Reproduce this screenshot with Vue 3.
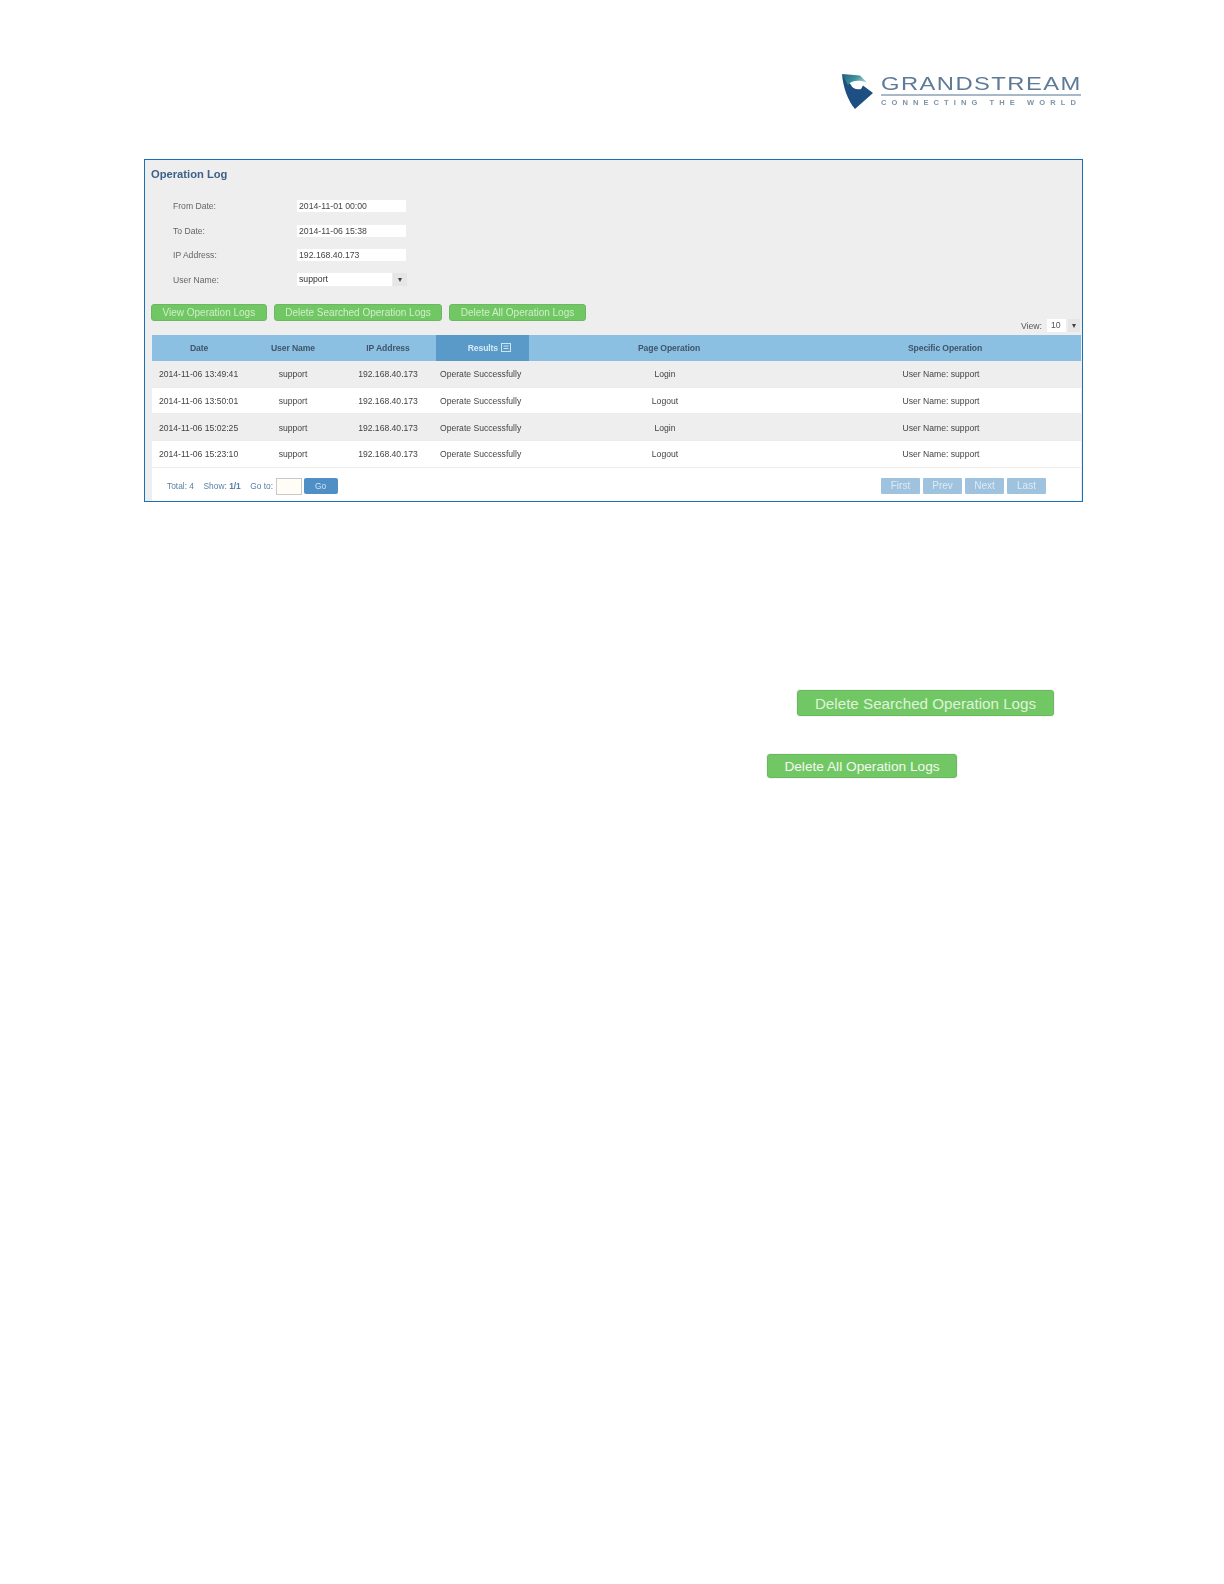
<script setup>
const fields = [
  { label: 'From Date:', value: '2014-11-01 00:00' },
  { label: 'To Date:', value: '2014-11-06 15:38' },
  { label: 'IP Address:', value: '192.168.40.173' },
]
const topButtons = ['View Operation Logs', 'Delete Searched Operation Logs', 'Delete All Operation Logs']
const rows = [
  ['2014-11-06 13:49:41', 'Login'],
  ['2014-11-06 13:50:01', 'Logout'],
  ['2014-11-06 15:02:25', 'Login'],
  ['2014-11-06 15:23:10', 'Logout'],
]
</script>

<template>
  <div class="page">
    <header class="logo">
      <svg class="mark" viewBox="0 0 36 38" width="36" height="38">
        <defs>
          <linearGradient id="teal" x1="0" y1="0" x2="1" y2="0.4">
            <stop offset="0" stop-color="#1f5f80" />
            <stop offset="0.6" stop-color="#3f929c" />
            <stop offset="1" stop-color="#9cc9cc" />
          </linearGradient>
        </defs>
        <path d="M2 1 C3 14 8 28 15 36 L33 20 L23 12.5 L21 16 C16 17 12 15 11 12 L8 8 Z" fill="#1d4f82" />
        <path d="M2 1 L20 2.5 L27 9.5 C20 7 14 7 10 10 L8 12 Z" fill="url(#teal)" />
      </svg>
      <div class="wordmark">
        <div class="brand">GRANDSTREAM</div>
        <div class="rule"></div>
        <div class="tagline">CONNECTING THE WORLD</div>
      </div>
    </header>

    <section class="panel">
      <h2 class="title">Operation Log</h2>
      <div class="form">
        <div v-for="f in fields" :key="f.label" class="field">
          <span class="label">{{ f.label }}</span>
          <span class="input">{{ f.value }}</span>
        </div>
        <div class="field">
          <span class="label">User Name:</span>
          <span class="select"><span class="select-value">support</span><span class="arrow">▾</span></span>
        </div>
      </div>

      <div class="actions">
        <button v-for="b in topButtons" :key="b" class="btn-green small">{{ b }}</button>
      </div>

      <div class="view-row">
        <span>View:</span>
        <span class="view-select"><span class="view-value">10</span><span class="arrow">▾</span></span>
      </div>

      <div class="table">
        <div class="row head">
          <div class="c">Date</div>
          <div class="c">User Name</div>
          <div class="c">IP Address</div>
          <div class="c sorted">Results
            <svg class="filter" viewBox="0 0 10 9" width="10" height="9">
              <rect x="0.5" y="0.5" width="9" height="8" fill="none" stroke="#cfe3f2" />
              <path d="M2.5 3 H7.5 M2.5 5.5 H7.5" stroke="#cfe3f2" />
            </svg>
          </div>
          <div class="c">Page Operation</div>
          <div class="c">Specific Operation</div>
        </div>
        <div v-for="r in rows" :key="r[0]" class="row body">
          <div class="l date">{{ r[0] }}</div>
          <div class="c">support</div>
          <div class="c">192.168.40.173</div>
          <div class="l res">Operate Successfully</div>
          <div class="c page-op">{{ r[1] }}</div>
          <div class="c spec">User Name: support</div>
        </div>
        <div class="pager">
          <div class="pager-left">
            <span>Total: 4</span>
            <span>Show: <b>1/1</b></span>
            <span class="goto">Go to:</span>
            <span class="go-input"></span>
            <span class="go">Go</span>
          </div>
          <div class="pager-right">
            <span v-for="p in ['First', 'Prev', 'Next', 'Last']" :key="p" class="nav">{{ p }}</span>
          </div>
        </div>
      </div>
    </section>

    <div class="big first"><button class="btn-green b16">Delete Searched Operation Logs</button></div>
    <div class="big second"><button class="btn-green b14">Delete All Operation Logs</button></div>
  </div>
</template>

<style scoped>
.page {
  width: 1224px;
  height: 1584px;
  background: #fff;
  font-family: "Liberation Sans", Arial, sans-serif;
  overflow: hidden;
  box-sizing: border-box;
  padding-top: 72px;
}
.logo {
  display: flex;
  justify-content: flex-end;
  align-items: flex-start;
  height: 87px;
  padding-right: 143px;
  gap: 5px;
  filter: blur(0.6px);
}
.mark { display: block; margin-top: 1px; }
.wordmark { width: 200px; }
.brand {
  font-size: 18px;
  line-height: 20px;
  margin-top: 2px;
  letter-spacing: 1.1px;
  color: #5d7a97;
  white-space: nowrap;
  transform: scaleX(1.32);
  transform-origin: left center;
}
.rule {
  height: 2px;
  background: #a9b8c6;
}
.tagline {
  font-size: 7.5px;
  line-height: 10px;
  margin-top: 2px;
  letter-spacing: 5.1px;
  color: #7d93a8;
  white-space: nowrap;
  font-weight: bold;
}
.panel {
  margin-left: 144px;
  width: 939px;
  height: 343px;
  box-sizing: border-box;
  border: 1px solid #1a6fb5;
  background: #eeeeee;
  position: relative;
  color: #555;
  font-size: 8.7px;
}
.panel > *:not(.table) { filter: blur(0.5px); }
.title {
  margin: 0;
  padding: 7px 0 0 6px;
  font-size: 11.2px;
  line-height: 14px;
  font-weight: bold;
  color: #3d5f8a;
}
.form {
  margin-top: 19px;
  display: flex;
  flex-direction: column;
  gap: 12.5px;
}
.field {
  display: flex;
  align-items: center;
  height: 12px;
  padding-left: 28px;
}
.label { width: 124px; font-size: 8.6px; color: #666; }
.input {
  width: 107px;
  height: 12px;
  line-height: 12px;
  background: #fff;
  padding-left: 2px;
  box-sizing: content-box;
  color: #444;
  font-size: 8.7px;
}
.select {
  display: flex;
  width: 110px;
  height: 13px;
  line-height: 13px;
  color: #333;
}
.select-value { flex: 1; background: #fff; padding-left: 2px; margin-right: 1px; }
.arrow { width: 14px; text-align: center; background: #e6e6e6; color: #444; font-size: 8px; }
.actions {
  display: flex;
  gap: 7px;
  margin: 18.5px 0 0 6px;
}
.btn-green {
  border: 1px solid #6cb860;
  background: #72c765;
  color: #e8f6e4;
  border-radius: 3px;
  font-family: inherit;
  padding: 0;
  cursor: pointer;
}
.small {
  height: 17px;
  font-size: 10px;
  line-height: 15px;
  padding: 0 10.5px;
  color: #cfeec8;
  white-space: nowrap;
}
.view-row {
  position: absolute;
  top: 159px;
  right: 2px;
  display: flex;
  align-items: center;
  gap: 5px;
  font-size: 8.7px;
}
.view-select { display: flex; width: 33px; height: 13px; line-height: 13px; }
.view-value { flex: 1; background: #fff; padding-left: 4px; margin-right: 2px; }
.view-select .arrow { width: 12px; }
.table {
  position: absolute;
  left: 7px;
  right: 1px;
  top: 175px;
  bottom: 0;
  background: #fff;
  font-size: 8.6px;
  color: #444;
}
.row {
  display: grid;
  grid-template-columns: 94px 94px 96px 93px 280px 272px;
  align-items: center;
}
.head {
  height: 26px;
  background: #8cc0e3;
  font-weight: bold;
  letter-spacing: -0.1px;
  color: #3f5568;
  filter: blur(0.5px);
}
.body {
  height: 26.7px;
  padding-top: 1px;
  border-bottom: 1px solid #ececec;
  box-sizing: border-box;
  filter: blur(0.5px);
}
.body:nth-child(even) { background: #eeeeee; }
.c { text-align: center; }
.l { text-align: left; }
.date { padding-left: 7px; }
.res { padding-left: 4px; }
.page-op { padding-right: 8px; }
.spec { padding-right: 8px; }
.sorted {
  align-self: stretch;
  line-height: 26px;
  background: #5a9ac9;
  color: #d7e9f5;
  white-space: nowrap;
  padding-left: 14px;
}
.filter { vertical-align: -1px; margin-left: 1px; }
.pager {
  display: flex;
  justify-content: space-between;
  align-items: center;
  height: 34px;
  padding: 3px 35px 0 15px;
  box-sizing: border-box;
  color: #5a7fa3;
  filter: blur(0.5px);
}
.pager-left { display: flex; align-items: center; gap: 9.5px; font-size: 8.4px; }
.goto { margin-right: -7px; }
.go-input {
  width: 24px;
  height: 15px;
  background: #fffdf6;
  border: 1px solid #c9c9c9;
  margin-right: -7.5px;
}
.go {
  width: 34px;
  height: 16px;
  line-height: 16px;
  background: #4f8fc6;
  border-radius: 2px;
  color: #cfe4f5;
  text-align: center;
}
.pager-right { display: flex; gap: 3px; }
.nav {
  width: 39px;
  height: 16px;
  line-height: 16px;
  background: #9fc2de;
  color: #dcebf6;
  text-align: center;
  font-size: 10px;
  border-radius: 1px;
}
.big { display: flex; }
.first { margin: 188px 0 0 797px; width: 257px; height: 26px; }
.second { margin: 38px 0 0 767px; width: 190px; height: 24px; }
.b16 {
  width: 100%;
  font-size: 15.2px;
  color: #dff3da;
  box-shadow: 0 0 0 1px #f3f3f3;
}
.b14 {
  width: 100%;
  font-size: 13.7px;
  color: #f2faf0;
  box-shadow: 0 0 0 1px #f3f3f3;
}
</style>

<style>
html, body { background: #fff; }
</style>
